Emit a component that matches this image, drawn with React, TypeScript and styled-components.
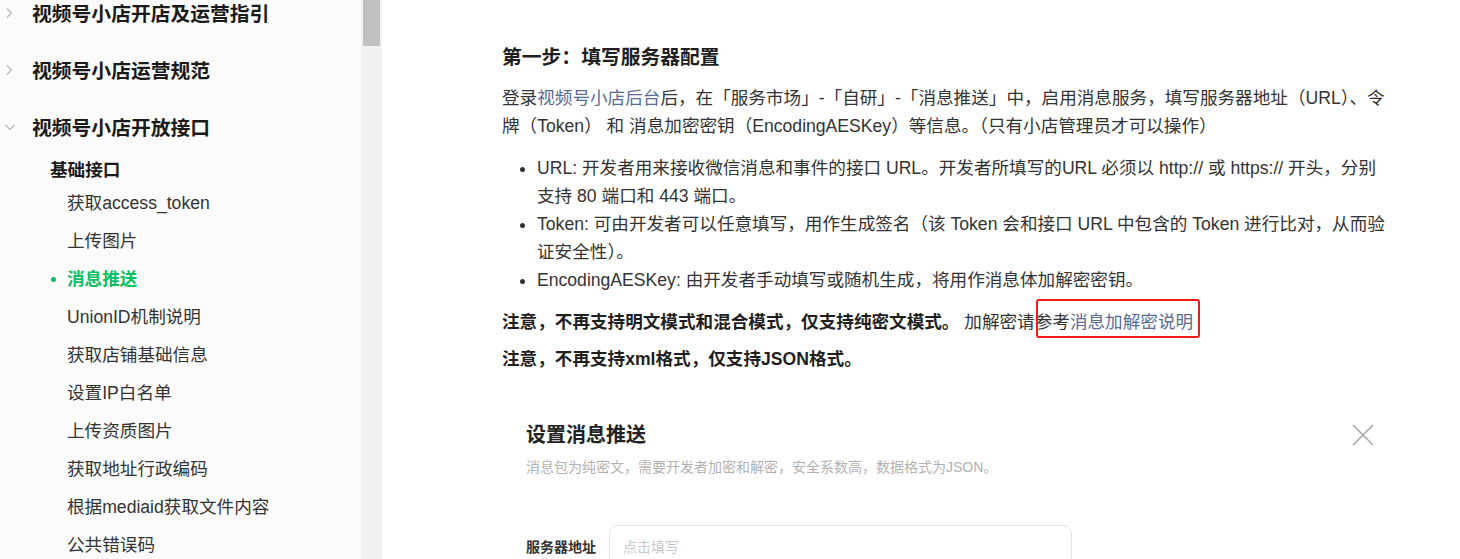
import React from "react";
import styled, { createGlobalStyle } from "styled-components";

const GlobalStyle = createGlobalStyle`
  html, body { margin: 0; padding: 0; height: 100%; overflow: hidden; background: #fff; }
  body { font-family: "Liberation Sans", "Noto Sans CJK SC", sans-serif; }
  * { box-sizing: border-box; }
`;

const Page = styled.div`
  display: flex;
  width: 1460px;
  height: 559px;
  overflow: hidden;
`;

const Sidebar = styled.aside`
  width: 361px;
  flex: none;
  background: #fbfbfb;
  overflow: hidden;
`;

const NavList = styled.div`
  display: flex;
  flex-direction: column;
  margin-top: -16px;
`;

const GroupRow = styled.div`
  display: flex;
  align-items: center;
  height: 57px;
  padding-left: 4px;
  font-size: 19.8px;
  font-weight: 700;
  color: #1a1a1a;
`;

const Chevron = styled.span`
  width: 28px;
  display: flex;
  align-items: center;
  color: #b8b8b8;
`;

const SubHeading = styled.div`
  height: 29px;
  padding-top: 2px;
  line-height: 27px;
  padding-left: 50px;
  font-size: 17.6px;
  font-weight: 700;
  color: #1a1a1a;
`;

const NavItem = styled.div<{ $active?: boolean }>`
  position: relative;
  height: 38px;
  line-height: 38px;
  padding-left: 67px;
  font-size: 17.6px;
  color: ${(p) => (p.$active ? "#07c160" : "#333")};
  font-weight: ${(p) => (p.$active ? 700 : 400)};
  white-space: nowrap;
`;

const ActiveDot = styled.span`
  position: absolute;
  left: 51px;
  top: 17px;
  width: 5px;
  height: 5px;
  border-radius: 50%;
  background: #07c160;
`;

const ScrollTrack = styled.div`
  width: 21px;
  flex: none;
  background: #f1f1f1;
  padding: 0 2px 0 2px;
`;

const ScrollThumb = styled.div`
  height: 46px;
  background: #c1c1c1;
`;

const Main = styled.main`
  flex: 1;
  background: #fff;
  padding: 43px 0 0 120px;
  color: #333;
`;

const Content = styled.div`
  width: 888px;
  font-size: 17.6px;
  line-height: 28px;
`;

const Heading = styled.h3`
  margin: 0;
  font-size: 19.8px;
  line-height: 28px;
  font-weight: 700;
  color: #1f1f1f;
`;

const Para = styled.p<{ $mt: number }>`
  margin: ${(p) => p.$mt}px 0 0;
`;

const Link = styled.a`
  color: #576b95;
  text-decoration: none;
`;

const AnnotatedLink = styled.a`
  position: relative;
  display: inline-block;
  color: #576b95;
  text-decoration: none;
`;

const RedBox = styled.span`
  position: absolute;
  left: -34px;
  top: -9px;
  width: 164px;
  height: 39px;
  border: 2px solid #f21a1a;
  border-radius: 3px;
  pointer-events: none;
`;

const BulletList = styled.ul`
  margin: 14px 0 0;
  padding-left: 35px;
  list-style: disc;
`;

const Strong = styled.strong`
  font-weight: 700;
  color: #1f1f1f;
`;

const DialogShot = styled.figure`
  width: 896px;
  margin: 27px 0 0;
  padding: 21px 24px 0;
`;

const DialogHead = styled.div`
  display: flex;
  justify-content: space-between;
  align-items: center;
`;

const DialogTitle = styled.div`
  font-size: 20px;
  line-height: 28px;
  font-weight: 700;
  color: #222;
`;

const CloseIcon = styled.svg`
  display: block;
`;

const DialogDesc = styled.div`
  margin-top: 8px;
  font-size: 14px;
  line-height: 20px;
  color: #b2b2b2;
`;

const FieldRow = styled.div`
  display: flex;
  align-items: center;
  margin-top: 48px;
`;

const FieldLabel = styled.div`
  width: 83px;
  font-size: 14px;
  font-weight: 700;
  color: #333;
`;

const FieldInput = styled.div`
  width: 463px;
  height: 44px;
  border: 1px solid #e6e6e6;
  border-radius: 8px;
  padding-left: 13px;
  display: flex;
  align-items: center;
  font-size: 14px;
  color: #c8c8c8;
`;

const ChevronRight = () => (
  <svg width="10" height="12" viewBox="0 0 10 12">
    <polyline points="3,1.5 7.5,6 3,10.5" fill="none" stroke="currentColor" strokeWidth="1.2" />
  </svg>
);

const ChevronDown = () => (
  <svg width="12" height="10" viewBox="0 0 12 10">
    <polyline points="1.5,3 6,7.5 10.5,3" fill="none" stroke="currentColor" strokeWidth="1.2" />
  </svg>
);

const items = [
  "获取access_token",
  "上传图片",
  "消息推送",
  "UnionID机制说明",
  "获取店铺基础信息",
  "设置IP白名单",
  "上传资质图片",
  "获取地址行政编码",
  "根据mediaid获取文件内容",
  "公共错误码",
];

export default function App() {
  return (
    <>
      <GlobalStyle />
      <Page>
        <Sidebar>
          <NavList>
            <GroupRow>
              <Chevron><ChevronRight /></Chevron>视频号小店开店及运营指引
            </GroupRow>
            <GroupRow>
              <Chevron><ChevronRight /></Chevron>视频号小店运营规范
            </GroupRow>
            <GroupRow>
              <Chevron><ChevronDown /></Chevron>视频号小店开放接口
            </GroupRow>
            <SubHeading>基础接口</SubHeading>
            {items.map((t) => (
              <NavItem key={t} $active={t === "消息推送"}>
                {t === "消息推送" && <ActiveDot />}
                {t}
              </NavItem>
            ))}
          </NavList>
        </Sidebar>
        <ScrollTrack>
          <ScrollThumb />
        </ScrollTrack>
        <Main>
          <Content>
            <Heading>第一步：填写服务器配置</Heading>
            <Para $mt={13}>
              登录<Link href="#">视频号小店后台</Link>后，在「服务市场」-「自研」-「消息推送」中，启用消息服务，填写服务器地址（URL）、令牌（Token） 和 消息加密密钥（EncodingAESKey）等信息。（只有小店管理员才可以操作）
            </Para>
            <BulletList>
              <li>URL: 开发者用来接收微信消息和事件的接口 URL。开发者所填写的URL 必须以 http:// 或 https:// 开头，分别支持 80 端口和 443 端口。</li>
              <li>Token: 可由开发者可以任意填写，用作生成签名（该 Token 会和接口 URL 中包含的 Token 进行比对，从而验证安全性）。</li>
              <li>EncodingAESKey: 由开发者手动填写或随机生成，将用作消息体加解密密钥。</li>
            </BulletList>
            <Para $mt={14}>
              <Strong>注意，不再支持明文模式和混合模式，仅支持纯密文模式。</Strong> 加解密请参考
              <AnnotatedLink href="#">
                消息加解密说明
                <RedBox />
              </AnnotatedLink>
            </Para>
            <Para $mt={9}>
              <Strong>注意，不再支持xml格式，仅支持JSON格式。</Strong>
            </Para>
            <DialogShot>
              <DialogHead>
                <DialogTitle>设置消息推送</DialogTitle>
                <CloseIcon width="22" height="22" viewBox="0 0 22 22">
                  <path d="M1 1 L21 21 M21 1 L1 21" stroke="#a8a8a8" strokeWidth="1.6" />
                </CloseIcon>
              </DialogHead>
              <DialogDesc>消息包为纯密文，需要开发者加密和解密，安全系数高，数据格式为JSON。</DialogDesc>
              <FieldRow>
                <FieldLabel>服务器地址</FieldLabel>
                <FieldInput>点击填写</FieldInput>
              </FieldRow>
            </DialogShot>
          </Content>
        </Main>
      </Page>
    </>
  );
}
